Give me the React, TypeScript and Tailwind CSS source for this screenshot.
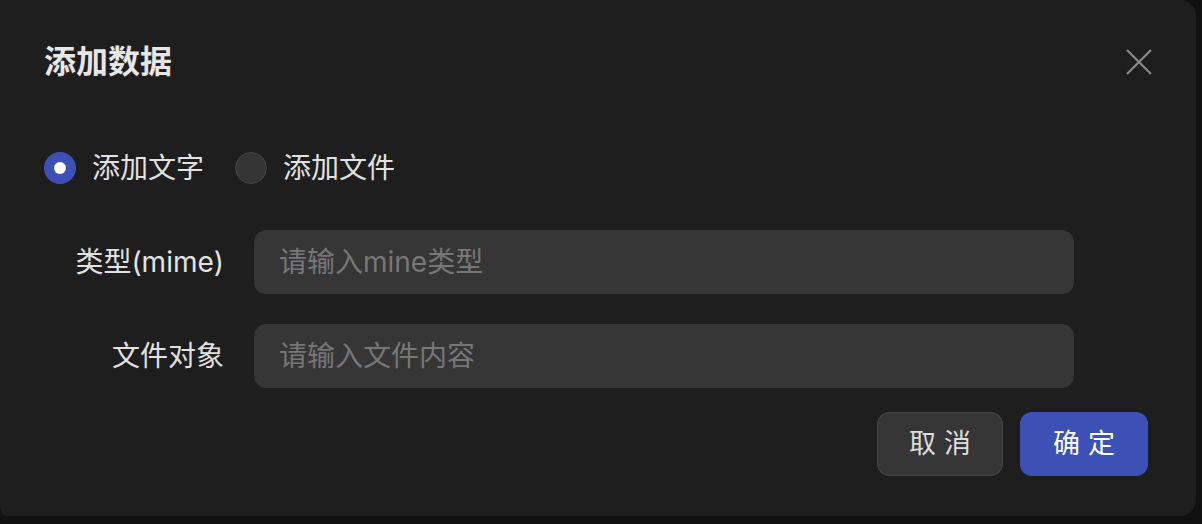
import { useState } from "react";

const font = { fontFamily: '"Inter", "Noto Sans CJK SC", sans-serif' };

function Radio({
  checked,
  label,
  onClick,
}: {
  checked: boolean;
  label: string;
  onClick: () => void;
}) {
  return (
    <button onClick={onClick} className="flex items-center gap-4">
      {checked ? (
        <span className="w-8 h-8 rounded-full bg-[#3d50b5] flex items-center justify-center">
          <span className="w-3 h-3 rounded-full bg-white" />
        </span>
      ) : (
        <span className="w-8 h-8 rounded-full bg-[#353535] border border-[#444444]" />
      )}
      <span className="text-[28px] leading-10 text-[#e2e2e2]">{label}</span>
    </button>
  );
}

function Field({ label, placeholder }: { label: string; placeholder: string }) {
  return (
    <div className="flex items-center gap-[30px]">
      <label className="w-[180px] text-right text-[28px] text-[#e2e2e2]">
        {label}
      </label>
      <input
        placeholder={placeholder}
        className="w-[820px] h-16 rounded-[12px] bg-[#363636] px-[25px] text-[28px] text-[#e2e2e2] placeholder:text-[#777777] outline-none"
      />
    </div>
  );
}

export default function App() {
  const [mode, setMode] = useState<"text" | "file">("text");

  return (
    <div className="w-[1202px] h-[524px] bg-[#111111]" style={font}>
      <div className="w-[1196px] h-[516px] bg-[#1e1e1e] rounded-tr-[16px] rounded-br-[16px] rounded-bl-[8px] px-[44px] pt-10 pb-10 flex flex-col">
        <div className="flex items-center justify-between h-11">
          <h2 className="text-[32px] font-bold text-[#e6e6e6]">添加数据</h2>
          <button className="w-[26px] h-[26px] flex items-center justify-center text-[#8a8a8a]">
            <svg width="26" height="26" viewBox="0 0 26 26" fill="none">
              <path
                d="M1 1L25 25M25 1L1 25"
                stroke="currentColor"
                strokeWidth="2.2"
              />
            </svg>
          </button>
        </div>

        <div className="mt-16 h-10 flex items-center gap-[31px]">
          <Radio
            checked={mode === "text"}
            label="添加文字"
            onClick={() => setMode("text")}
          />
          <Radio
            checked={mode === "file"}
            label="添加文件"
            onClick={() => setMode("file")}
          />
        </div>

        <div className="mt-[42px] flex flex-col gap-[30px]">
          <Field label="类型(mime)" placeholder="请输入mine类型" />
          <Field label="文件对象" placeholder="请输入文件内容" />
        </div>

        <div className="mt-6 pr-1 flex justify-end gap-[17px]">
          <button className="w-[126px] h-16 rounded-[12px] bg-[#363636] border border-[#474747] text-[27px] text-[#dedede] tracking-[8px] pl-[8px]">
            取消
          </button>
          <button className="w-[128px] h-16 rounded-[12px] bg-[#3d50b5] text-[27px] text-white tracking-[8px] pl-[8px]">
            确定
          </button>
        </div>
      </div>
    </div>
  );
}
